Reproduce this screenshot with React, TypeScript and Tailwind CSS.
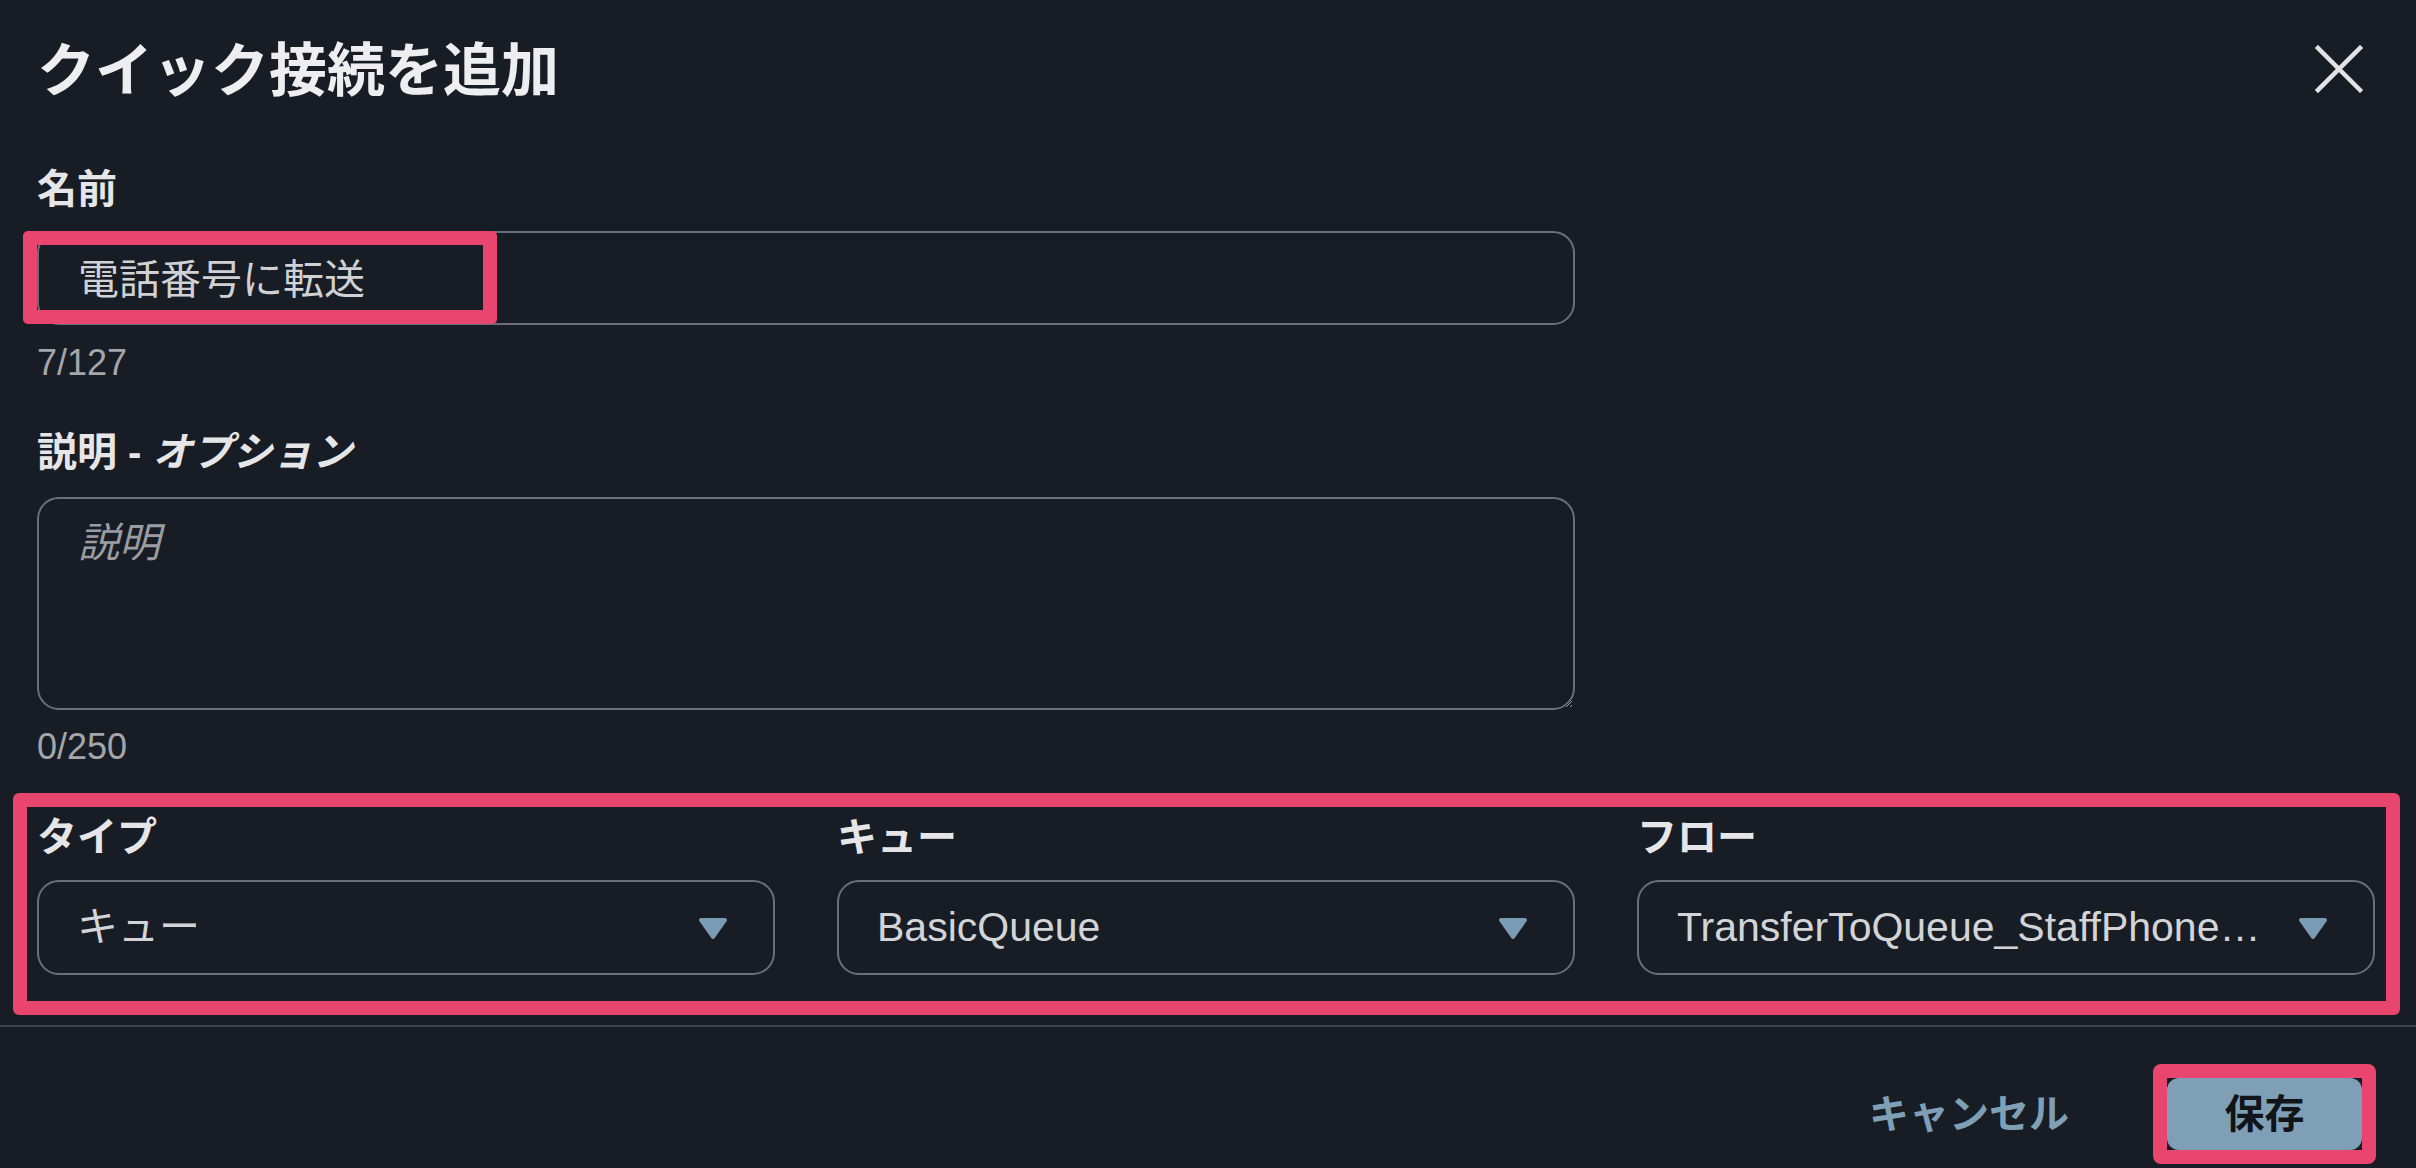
import React from 'react';

const RED = 'border-[#e8466e]';

function Arrow() {
  return (
    <svg width="30" height="24" viewBox="0 0 30 24" className="shrink-0">
      <path d="M3 2 H27 A2 2 0 0 1 28.7 5 L16.7 22 A2 2 0 0 1 13.3 22 L1.3 5 A2 2 0 0 1 3 2 Z" fill="#7b9cb5" />
    </svg>
  );
}

function Select({ label, value }: { label: string; value: string }) {
  return (
    <div className="flex flex-col">
      <label className="text-[40px] font-bold leading-none text-[#e6e6e9]">{label}</label>
      <div className="mt-[23px] flex h-[95px] items-center gap-[25px] rounded-[22px] border-2 border-[#6c6f77] pl-[38px] pr-[45px]">
        <span className="min-w-0 flex-1 truncate text-[41px] leading-[1.2] text-[#d3d4d7]">{value}</span>
        <Arrow />
      </div>
    </div>
  );
}

export default function App() {
  return (
    <div className="h-[1168px] w-full overflow-hidden bg-[#181d25] font-['Liberation_Sans','Noto_Sans_CJK_JP',sans-serif]">
      <div className="pl-[37px] pr-[40px]">
        {/* header */}
        <div className="flex items-start justify-between pt-[42px]">
          <h1 className="text-[58px] font-bold leading-none text-[#eeeef0]">クイック接続を追加</h1>
          <button className="mr-[13px] mt-[3px]" aria-label="閉じる">
            <svg width="48" height="48" viewBox="0 0 48 48">
              <path d="M3 3 L45 45 M45 3 L3 45" stroke="#e3e3e6" strokeWidth="4.5" strokeLinecap="square" />
            </svg>
          </button>
        </div>

        {/* name */}
        <label className="mt-[69px] block text-[40px] font-bold leading-none text-[#e6e6e9]">名前</label>
        <div className="relative mt-[22px] w-[1538px]">
          <input
            defaultValue="電話番号に転送"
            className="h-[94px] w-full rounded-[22px] border-2 border-[#6c6f77] bg-transparent pb-[4px] pl-[39px] text-[41px] leading-none text-[#d0d1d4] outline-none"
          />
          <div className={`pointer-events-none absolute left-[-14px] top-0 h-[93px] w-[474px] rounded-[5px] border-[14px] ${RED}`} />
        </div>
        <div className="mt-[20px] text-[36px] leading-none text-[#a4a6ab]">7/127</div>

        {/* description */}
        <label className="mt-[51px] block text-[40px] font-bold leading-none text-[#e6e6e9]">
          説明 - <span className="italic">オプション</span>
        </label>
        <textarea
          placeholder="説明"
          className="mt-[25px] block h-[213px] w-[1538px] rounded-[22px] border-2 border-[#6c6f77] bg-transparent pl-[39px] pt-[24px] text-[41px] leading-none text-[#d0d1d4] outline-none [color-scheme:dark] placeholder:italic placeholder:text-[#9b9da3]"
        />
        <div className="mt-[19px] text-[36px] leading-none text-[#a4a6ab]">0/250</div>

        {/* selects */}
        <div className={`-ml-[24px] mt-[28px] w-[2387px] rounded-[6px] border-[14px] ${RED} pb-[26px] pl-[10px] pr-[11px] pt-[10px]`}>
          <div className="grid grid-cols-3 gap-x-[62px]">
            <Select label="タイプ" value="キュー" />
            <Select label="キュー" value="BasicQueue" />
            <Select label="フロー" value="TransferToQueue_StaffPhoneNumber" />
          </div>
        </div>
      </div>

      <div className="mt-[10px] h-[2px] w-full bg-[#3d4149]" />

      {/* footer */}
      <div className="mt-[37px] flex items-center justify-end pr-[40px]">
        <button className="mr-[84px] text-[40px] font-bold leading-none text-[#7f9fb7]">キャンセル</button>
        <div className={`rounded-[8px] border-[14px] ${RED}`}>
          <button className="flex h-[72px] w-[195px] items-center justify-center rounded-[12px] bg-[#7f9fb7] text-[40px] font-bold leading-none text-[#111418]">
            保存
          </button>
        </div>
      </div>
    </div>
  );
}
